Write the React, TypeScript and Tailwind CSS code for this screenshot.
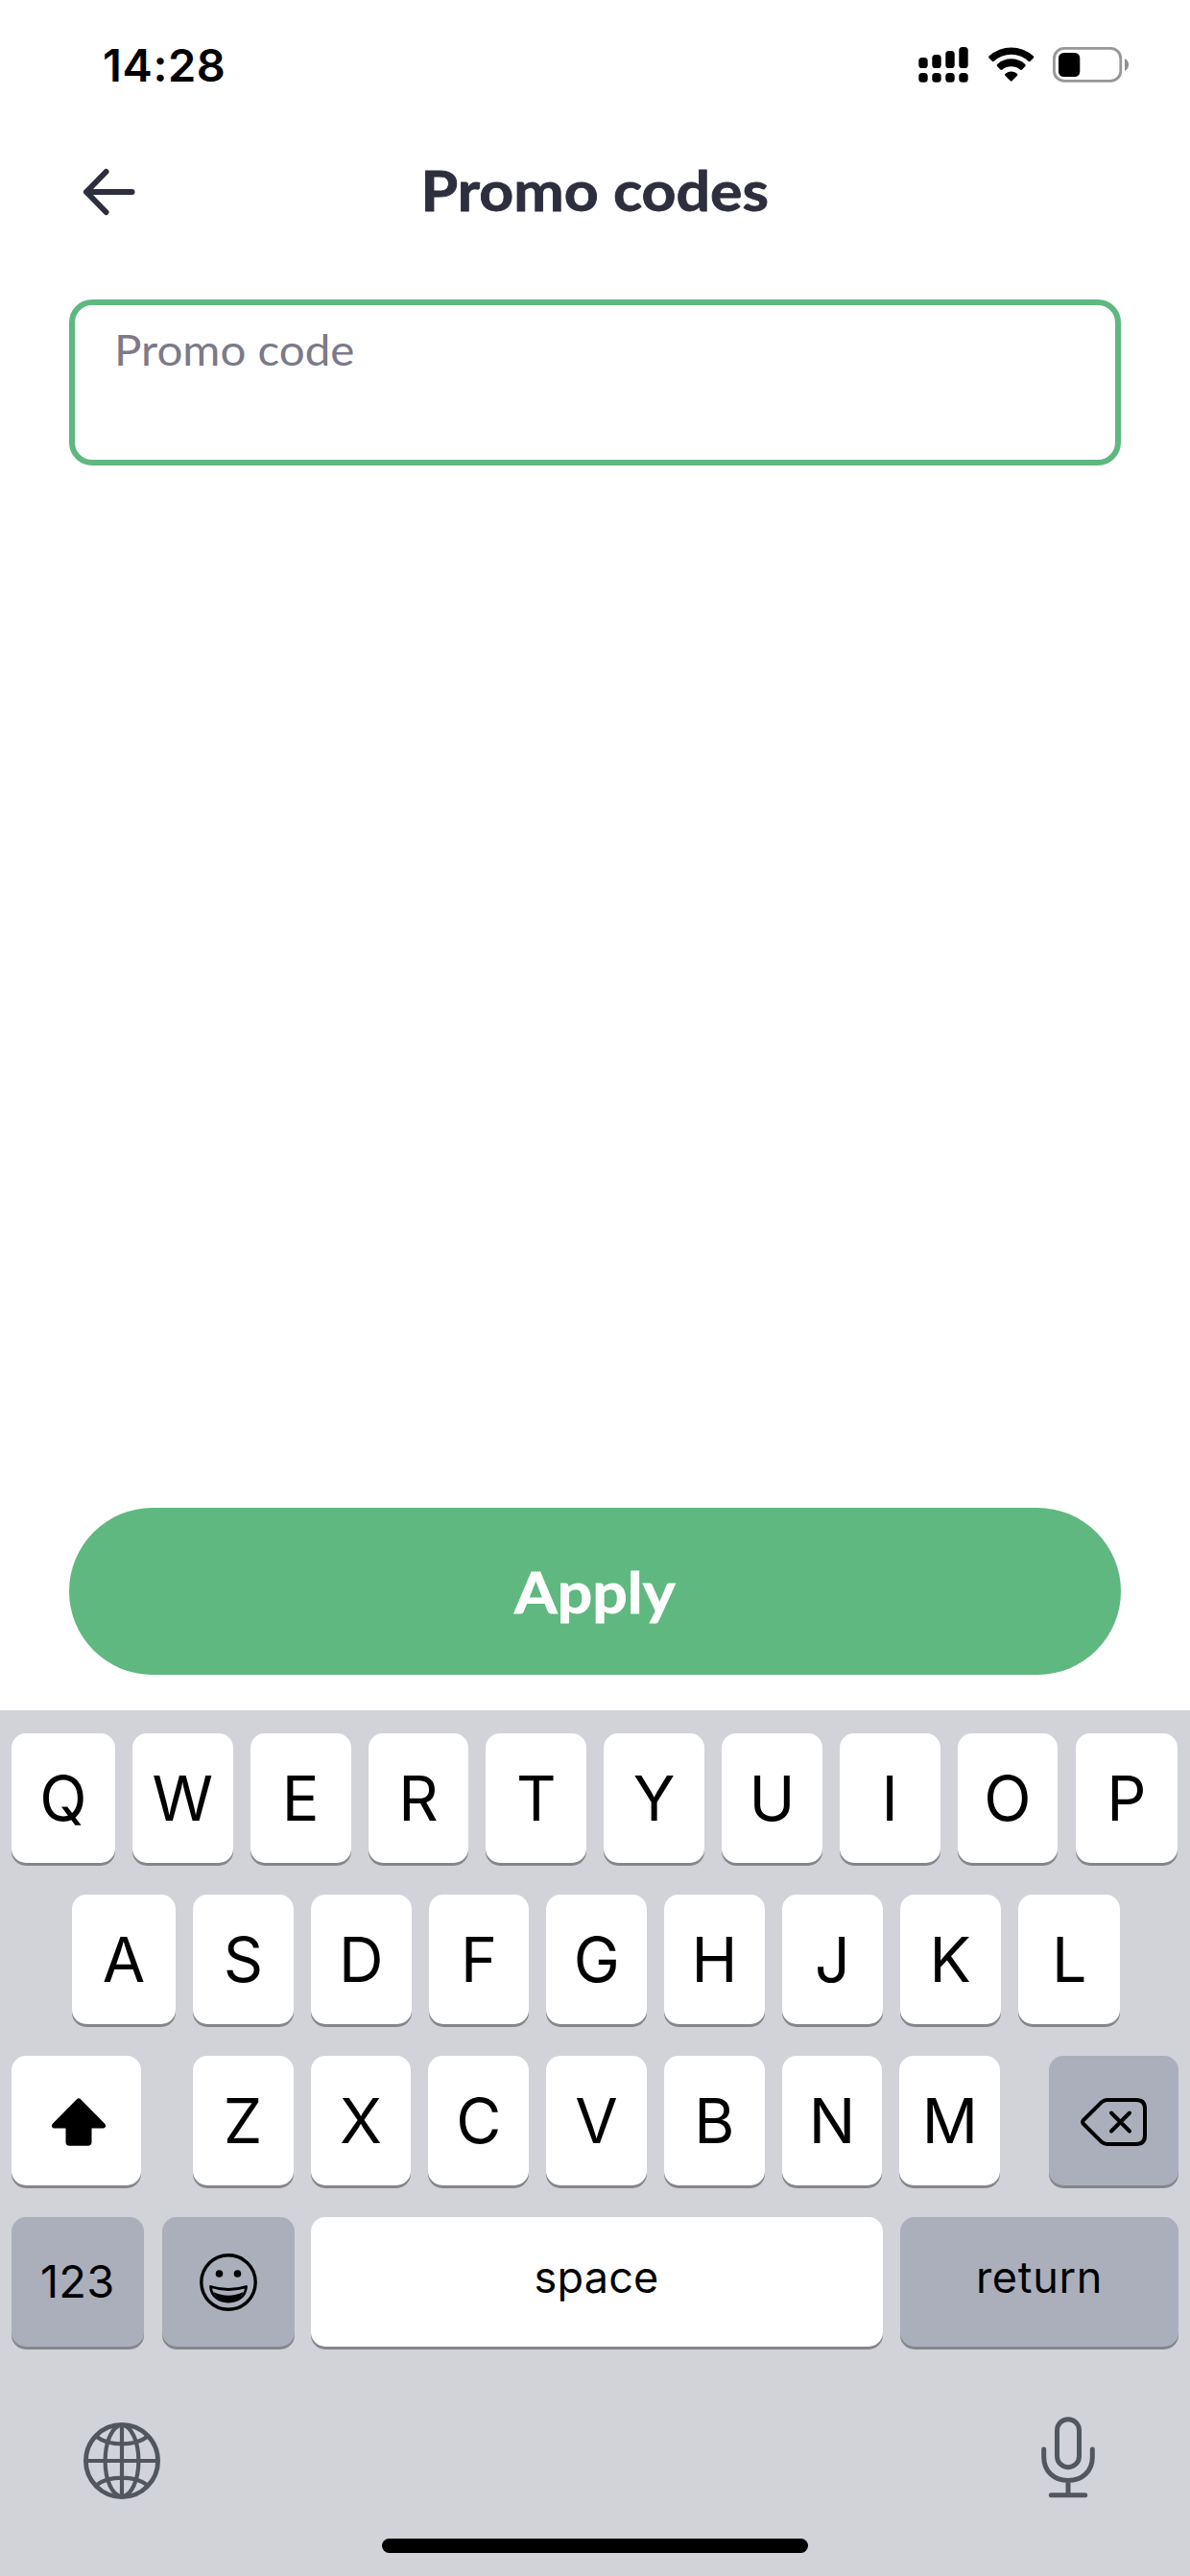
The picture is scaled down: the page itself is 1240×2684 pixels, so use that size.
import clsx from "clsx";
import type { ReactNode } from "react";

interface KeyProps {
  children?: ReactNode;
  className?: string;
  dark?: boolean;
}

const topRow = ["Q", "W", "E", "R", "T", "Y", "U", "I", "O", "P"];
const middleRow = ["A", "S", "D", "F", "G", "H", "J", "K", "L"];
const bottomRow = ["Z", "X", "C", "V", "B", "N", "M"];

function Key({ children, className, dark }: KeyProps) {
  return (
    <button
      type="button"
      className={clsx(
        "flex h-[135px] shrink-0 items-center justify-center rounded-[15px] text-black shadow-[0_3px_0_#85868b]",
        dark ? "bg-[#abafbb]" : "bg-white",
        className,
      )}
    >
      {children}
    </button>
  );
}

function LetterKeys({ letters, wideEnds }: { letters: string[]; wideEnds?: boolean }) {
  return letters.map((letter, i) => (
    <Key
      key={letter}
      className={clsx(
        "pt-[2px] text-[64.5px] leading-none",
        wideEnds && i === 0 && "w-[108px]",
        wideEnds && i === letters.length - 1 && "ml-[0.6px] w-[106px]",
        (!wideEnds || (i > 0 && i < letters.length - 1)) && "w-[104.8px]",
      )}
    >
      {letter}
    </Key>
  ));
}

function SignalIcon() {
  return (
    <svg width="52" height="37" viewBox="0 0 52 37">
      <rect x="0.3" y="11" width="9.4" height="11" rx="3.6" />
      <rect x="14.3" y="8" width="9.4" height="14" rx="3.6" />
      <rect x="28.3" y="4" width="9.4" height="18" rx="3.6" />
      <rect x="42.3" y="0" width="9.4" height="22" rx="3.6" />
      <rect x="0.3" y="27" width="9.4" height="9.8" rx="3.6" />
      <rect x="14.3" y="27" width="9.4" height="9.8" rx="3.6" />
      <rect x="28.3" y="27" width="9.4" height="9.8" rx="3.6" />
      <rect x="42.3" y="27" width="9.4" height="9.8" rx="3.6" />
    </svg>
  );
}

function WifiIcon() {
  return (
    <svg width="48" height="37" viewBox="0 0 48 37">
      <path d="M.8 9.3A34 34 0 0 1 46.6 9.3Q47.7 10.3 46.8 11.4L43.6 14.8Q42.5 15.6 41.5 14.7A26 26 0 0 0 5.9 14.7Q4.9 15.6 3.8 14.8L.6 11.4Q-.3 10.3 .8 9.3Z" />
      <path d="M9.2 17.9A21.7 21.7 0 0 1 38.2 17.9Q39.3 19 38.4 20L35 23.6Q34 24.5 32.9 23.6A14.5 14.5 0 0 0 14.5 23.6Q13.4 24.5 12.4 23.6L9 20Q8.1 19 9.2 17.9Z" />
      <path d="M17.6 27.7A10 10 0 0 1 29.8 27.7Q30.9 28.7 30 29.7L24.6 35.3Q23.7 36.1 22.8 35.3L17.4 29.7Q16.5 28.7 17.6 27.7Z" />
    </svg>
  );
}

function BatteryIcon() {
  return (
    <svg width="80" height="37" viewBox="0 0 80 37">
      <rect x="1.4" y="1.4" width="69.4" height="34" rx="10.5" fill="none" stroke="#979797" strokeWidth="2.8" />
      <rect x="6" y="6" width="22.3" height="25" rx="5.5" />
      <path d="M75 12C77.4 13 79 15.5 79 18.4S77.4 23.8 75 24.8Z" fill="#8e8e8e" />
    </svg>
  );
}

function BackIcon() {
  return (
    <svg width="56" height="52" viewBox="0 0 56 52" fill="none" stroke="#2d2e3e" strokeWidth="6" strokeLinecap="round" strokeLinejoin="round">
      <path d="M24.5 5L4 26L24.5 47M4 26H51.5" />
      <path d="M4 26L10 20.5V31.5Z" fill="#2d2e3e" stroke="none" />
    </svg>
  );
}

function ShiftIcon() {
  return (
    <svg width="58" height="50" viewBox="0 0 58 50" className="ml-[4px] mt-[2px]">
      <path d="M27.2 .9Q29 -.6 30.8 .9L56.4 27Q58.5 30.5 55 31.5H42.5V46Q42.5 49.7 38.5 49.7H19.5Q15.5 49.7 15.5 46V31.5H3Q-.5 30.5 1.6 27Z" />
    </svg>
  );
}

function BackspaceIcon() {
  return (
    <svg width="70" height="50" viewBox="0 0 70 50" fill="none" stroke="black" strokeWidth="4" strokeLinecap="round" strokeLinejoin="round" className="ml-[2px] mt-[2px]">
      <path d="M27.5 2H58Q67 2 67 11V39Q67 48 58 48H27.5Q24.5 48 22 45.8L3 27Q1 25 3 23L22 4.2Q24.5 2 27.5 2Z" />
      <path d="M32 15.5L51 34.5M51 15.5L32 34.5" />
    </svg>
  );
}

function EmojiIcon() {
  return (
    <svg width="60" height="60" viewBox="0 0 60 60">
      <circle cx="30" cy="30" r="28.2" fill="none" stroke="black" strokeWidth="3.4" />
      <circle cx="20.5" cy="21" r="3.8" />
      <circle cx="39.5" cy="21" r="3.8" />
      <path d="M11.5 34.5Q30 40.5 48.5 34.5C48 44.5 40 50 30 50S12 44.5 11.5 34.5Z" fill="none" stroke="black" strokeWidth="2.8" strokeLinejoin="round" />
      <path d="M14.5 40Q30 47.5 45.5 40C42.5 46.8 37 50 30 50S17.5 46.8 14.5 40Z" />
    </svg>
  );
}

function GlobeIcon() {
  return (
    <svg width="80" height="80" viewBox="0 0 80 80" fill="none" stroke="#52565d" strokeWidth="4.2">
      <circle cx="40" cy="40" r="37.6" strokeWidth="4.8" />
      <ellipse cx="40" cy="40" rx="17.4" ry="37" />
      <path d="M40 3V77M3 40H77M13 14.5C27 25 53 25 67 14.5M13 65.5C27 55 53 55 67 65.5" />
    </svg>
  );
}

function MicIcon() {
  return (
    <svg width="56" height="85" viewBox="0 0 56 85" fill="none" stroke="#52565d" strokeWidth="5" strokeLinecap="round">
      <rect x="16.5" y="2.7" width="23" height="50" rx="11.5" />
      <path d="M2.7 34V42C2.7 57 13.5 66.5 28 66.5S53.3 57 53.3 42V34M28 67V81M10.3 81.7H45.7" />
    </svg>
  );
}

function StatusBar() {
  return (
    <div className="flex h-[134px] items-start justify-between pl-[107px] pr-[63px] pt-[49px]">
      <div className="-mt-[5px] text-[47px] font-semibold leading-[47px] tracking-[0.6px] text-black">14:28</div>
      <div className="flex">
        <SignalIcon />
        <div className="ml-[21px]">
          <WifiIcon />
        </div>
        <div className="ml-[19px]">
          <BatteryIcon />
        </div>
      </div>
    </div>
  );
}

function Keyboard() {
  return (
    <div className="flex h-[902px] flex-col bg-[#d1d3d9] pt-[24px]">
      <div className="flex gap-[18px] pl-[12px]">
        <LetterKeys letters={topRow} wideEnds />
      </div>
      <div className="mt-[33px] flex gap-[18px] pl-[75px]">
        <LetterKeys letters={middleRow} wideEnds />
      </div>
      <div className="mt-[33px] flex justify-between px-[12px]">
        <Key className="w-[135px]">
          <ShiftIcon />
        </Key>
        <div className="ml-[3px] flex gap-[18px]">
          <LetterKeys letters={bottomRow} />
        </div>
        <Key dark className="w-[135px]">
          <BackspaceIcon />
        </Key>
      </div>
      <div className="mt-[33px] flex pl-[12px] text-[45px] leading-none">
        <Key dark className="w-[137.5px] pb-[2px] text-[47px] tracking-[0.3px]">
          123
        </Key>
        <Key dark className="ml-[19.5px] w-[138px]">
          <EmojiIcon />
        </Key>
        <Key className="ml-[16.5px] w-[596px] pb-[10px] tracking-[0.2px]">space</Key>
        <Key dark className="ml-[18.5px] w-[290px] pb-[10px] tracking-[0.7px]">
          return
        </Key>
      </div>
      <div className="flex items-start justify-between pl-[87px] pr-[99px] pt-[73px]">
        <div className="pt-[6px]">
          <GlobeIcon />
        </div>
        <MicIcon />
      </div>
      <div className="mx-auto mt-auto mb-[24px] h-[15px] w-[444px] rounded-full bg-black" />
    </div>
  );
}

export default function App() {
  return (
    <div className="flex h-[2684px] w-[1240px] flex-col overflow-hidden bg-white font-['Inter',sans-serif]">
      <StatusBar />
      <header className="grid h-[132px] grid-cols-[1fr_auto_1fr] items-center px-[86px]">
        <button type="button">
          <BackIcon />
        </button>
        <h1 className="scale-x-[1.08] pb-[5px] font-['Lato',sans-serif] text-[58px] font-bold leading-none text-[#2d2e3e] [-webkit-text-stroke:0.8px_#2d2e3e]">
          Promo codes
        </h1>
      </header>
      <main className="flex flex-1 flex-col px-[72px] pt-[46px] pb-[37px] font-['Lato',sans-serif]">
        <label className="h-[173px] rounded-[24px] border-[6px] border-[#5fb87f] pl-[41px] pt-[24px] text-[44px] leading-[44px] text-[#7b7a89]">
          <span className="block w-fit origin-left scale-x-[1.08]">Promo code</span>
        </label>
        <button
          type="button"
          className="mt-auto flex h-[174px] items-center justify-center rounded-full bg-[#5fb87f] pt-[2px] text-[59px] font-bold text-white"
        >
          <span className="scale-x-[1.09] [-webkit-text-stroke:0.8px_white]">Apply</span>
        </button>
      </main>
      <Keyboard />
    </div>
  );
}
